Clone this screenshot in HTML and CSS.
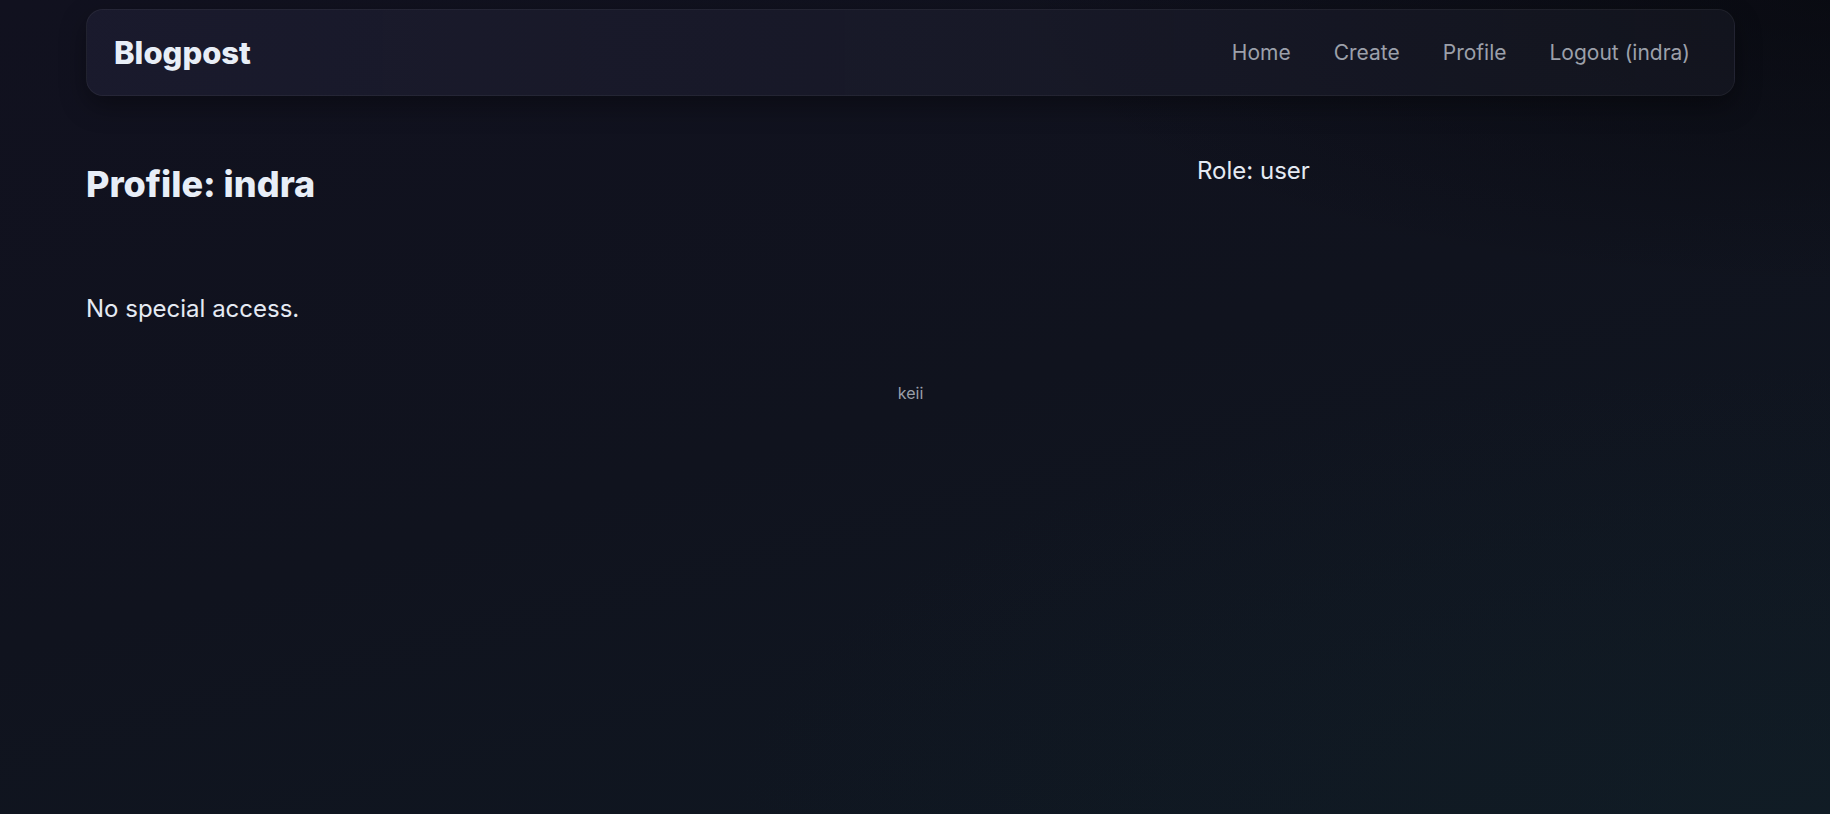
FILE: index.html
```html
<!DOCTYPE html>
<html lang="en">
<head>
<meta charset="utf-8">
<title>Blogpost - Profile</title>
<link rel="stylesheet" href="styles.css">
</head>
<body>
<div class="page">
  <header class="topbar">
    <a class="brand" href="#">Blogpost</a>
    <nav class="nav-links">
      <a href="#">Home</a>
      <a href="#">Create</a>
      <a href="#">Profile</a>
      <a href="#">Logout (indra)</a>
    </nav>
  </header>
  <main class="profile-grid">
    <section class="profile-main">
      <h1 class="profile-title">Profile: indra</h1>
      <p class="access">No special access.</p>
    </section>
    <aside class="profile-side">
      <p class="role">Role: user</p>
    </aside>
  </main>
  <footer class="site-footer">keii</footer>
</div>
</body>
</html>
```

FILE: styles.css
```css
html {
  min-height: 100%;
  background: #10121d;
}
body {
  margin: 0;
  min-height: 814px;
  font-family: Inter, "Noto Sans", "Liberation Sans", sans-serif;
  color: #e5eaf3;
  background:
    radial-gradient(ellipse 60% 55% at 100% 100%, rgba(18, 32, 40, 0.5), rgba(18, 32, 40, 0) 100%),
    radial-gradient(ellipse 45% 35% at 100% 0%, rgba(5, 6, 10, 0.6), rgba(5, 6, 10, 0) 100%),
    linear-gradient(165deg, #11111f 0%, #10131e 50%, #0f1822 100%);
}
.page {
  padding: 9px 95px 0 86px;
}
.topbar {
  box-sizing: border-box;
  height: 87px;
  display: flex;
  align-items: center;
  justify-content: space-between;
  padding: 0 28px 0 27px;
  border: 1px solid rgba(255, 255, 255, 0.05);
  border-radius: 17px;
  background: linear-gradient(90deg, rgba(34, 34, 56, 0.55), rgba(28, 30, 42, 0.45));
  box-shadow: 0 10px 26px rgba(0, 0, 0, 0.35);
}
.brand {
  font-size: 31px;
  font-weight: 800;
  color: #e8eef7;
  text-decoration: none;
}
.nav-links {
  display: flex;
  gap: 11px;
}
.nav-links a {
  padding: 8px 16px;
  font-size: 21px;
  color: #9ca0aa;
  text-decoration: none;
}
.profile-grid {
  display: grid;
  grid-template-columns: 1111px 1fr;
  margin-top: 60px;
}
.profile-title {
  margin: 7px 0 0;
  font-size: 36px;
  line-height: 1.2;
  font-weight: 800;
  color: #e8eef7;
}
.access {
  margin: 89px 0 0;
  font-size: 24px;
  line-height: 1.2;
  color: #e5eaf3;
}
.role {
  margin: 1px 0 0;
  font-size: 24px;
  line-height: 1.2;
  color: #e5eaf3;
}
.site-footer {
  margin-top: 60px;
  text-align: center;
  font-size: 16px;
  line-height: 1.2;
  color: #9a9fa9;
}
```
